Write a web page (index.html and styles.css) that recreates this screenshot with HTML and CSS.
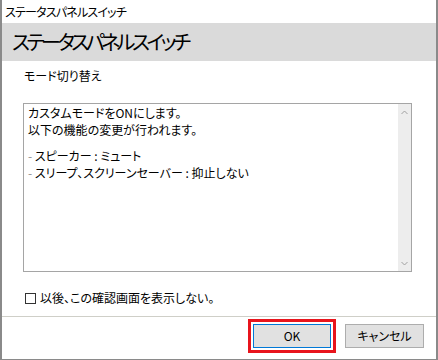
FILE: index.html
```html
<html>

<head>
    <meta charset="utf-8">
    <link rel="stylesheet" href="styles.css">
</head>

<body>
    <div class="window">
        <div class="titlebar">ステータスパネルスイッチ</div>
        <div class="header">ステータスパネルスイッチ</div>
        <div class="content">
            <div class="label">モード切り替え</div>
            <div class="textbox">
                <div class="message">
                    <div class="line">カスタムモードをONにします。</div>
                    <div class="line">以下の機能の変更が行われます。</div>
                </div>
                <div class="changes">
                    <div class="item"><span class="dash">-</span> スピーカー : ミュート</div>
                    <div class="item"><span class="dash">-</span> スリープ、スクリーンセーバー : 抑止しない</div>
                </div>
                <div class="scrollbar">
                    <svg width="7" height="5" viewBox="0 0 7 5"><path d="M0.5 4 L3.5 1 L6.5 4" fill="none" stroke="#a0a0a0" stroke-width="1"/></svg>
                    <svg width="7" height="5" viewBox="0 0 7 5"><path d="M0.5 1 L3.5 4 L6.5 1" fill="none" stroke="#a0a0a0" stroke-width="1"/></svg>
                </div>
            </div>
            <div class="checkrow">
                <span class="checkbox"></span>
                <span>以後、この確認画面を表示しない。</span>
            </div>
        </div>
        <div class="footer">
            <div class="btn btn-ok">OK</div>
            <div class="btn">キャンセル</div>
        </div>
    </div>
</body>

</html>
```

FILE: styles.css
```css
* {
    margin: 0;
    padding: 0;
    box-sizing: border-box;
}

body {
    font-family: "Noto Sans CJK JP", "Noto Sans", sans-serif;
    font-feature-settings: "palt";
    font-size: 12px;
    color: #000;
    background: #fff;
}

div.window {
    width: 438px;
    height: 360px;
    border: 2px solid #8a8a8a;
    border-top: none;
    border-bottom-width: 1px;
    display: flex;
    flex-direction: column;
    background: #fff;
}

div.titlebar {
    height: 23px;
    line-height: 24px;
    padding-left: 3px;
    font-size: 12px;
    letter-spacing: -0.8px;
}

div.header {
    height: 38px;
    line-height: 38px;
    padding-left: 10px;
    font-size: 20px;
    letter-spacing: -3.5px;
    background: #dadada;
}

div.content {
    flex: 1;
    padding: 7px 24px 0 21px;
}

div.label {
    line-height: 16px;
    padding-left: 1px;
}

div.textbox {
    position: relative;
    margin-top: 19px;
    height: 169px;
    border: 1px solid #a5a5a5;
    padding-left: 4px;
}

div.message {
    line-height: 17px;
}

div.changes {
    margin-top: 9px;
    line-height: 17px;
}

span.dash {
    color: #909090;
}

div.scrollbar {
    position: absolute;
    top: 0;
    right: 0;
    bottom: 0;
    width: 13px;
    background: #ededed;
    display: flex;
    flex-direction: column;
    justify-content: space-between;
    align-items: center;
    padding: 6px 0 5px;
}

div.checkrow {
    margin-top: 18px;
    display: flex;
    align-items: center;
    gap: 4px;
    line-height: 16px;
    padding-left: 2px;
}

span.checkbox {
    width: 11px;
    height: 11px;
    border: 1px solid #333;
}

div.footer {
    height: 43px;
    border-top: 1px solid #cfcfc8;
    display: flex;
    justify-content: flex-end;
    gap: 14px;
    padding: 7px 12px 0 0;
}

div.btn {
    width: 79px;
    height: 24px;
    line-height: 22px;
    text-align: center;
    background: #e1e1e1;
    border: 1px solid #adadad;
}

div.btn-ok {
    width: 78px;
    border-color: #0078d7;
    outline: 3px solid #e8141c;
    outline-offset: 2px;
}
```
